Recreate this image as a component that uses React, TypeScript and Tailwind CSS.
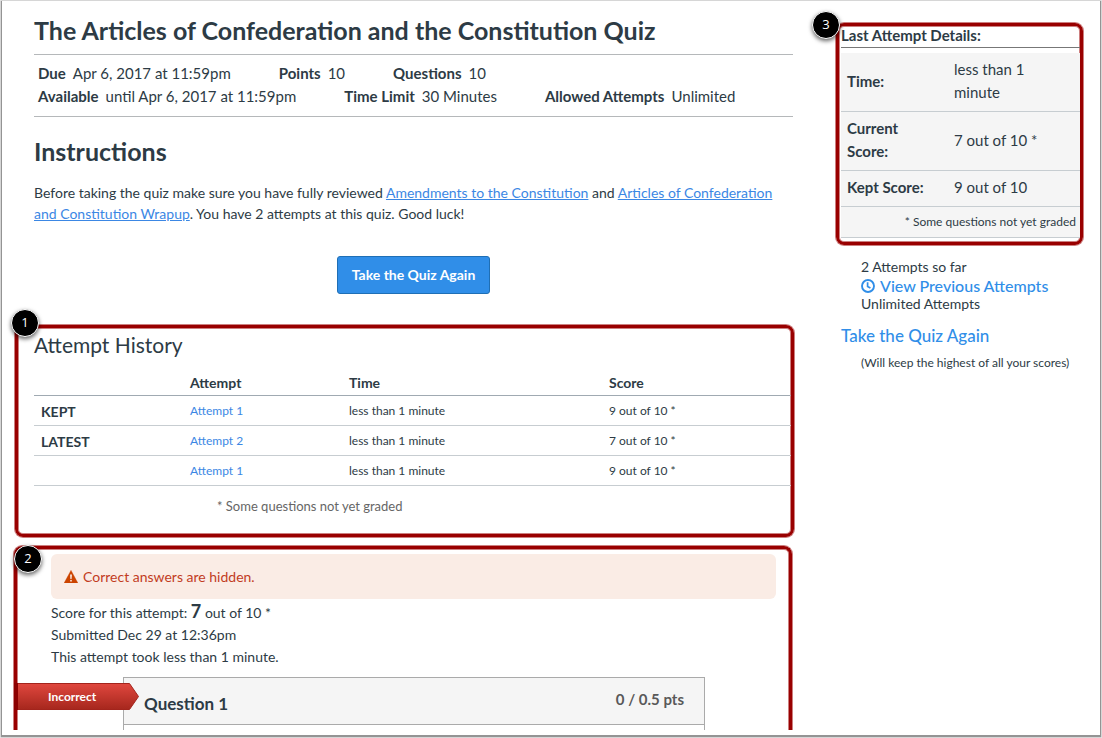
import React from 'react';

interface Attempt {
  label: string;
  name: string;
  time: string;
  score: string;
}

const attempts: Attempt[] = [
  { label: 'KEPT', name: 'Attempt 1', time: 'less than 1 minute', score: '9 out of 10 *' },
  { label: 'LATEST', name: 'Attempt 2', time: 'less than 1 minute', score: '7 out of 10 *' },
  { label: '', name: 'Attempt 1', time: 'less than 1 minute', score: '9 out of 10 *' },
];

const Detail: React.FC<{ label: string; value: string }> = ({ label, value }) => (
  <div className="flex gap-[7px]">
    <dt className="font-bold">{label}</dt>
    <dd>{value}</dd>
  </div>
);

const Badge: React.FC<{ value: number; className: string }> = ({ value, className }) => (
  <span
    className={`absolute flex size-7 items-center justify-center rounded-full border border-white bg-black font-['Open_Sans',sans-serif] text-[13px] text-white shadow-[0_2px_4px_rgba(0,0,0,0.6)] ${className}`}
  >
    {value}
  </span>
);

const ClockIcon = () => (
  <svg viewBox="0 0 14 14" className="size-[14px]" fill="none" stroke="currentColor" aria-hidden="true">
    <circle cx="7" cy="7" r="6" strokeWidth="1.9" />
    <path d="M6.6 3.2v4.200l2.800 1.600" strokeWidth="1.7" />
  </svg>
);

const WarningIcon = () => (
  <svg viewBox="0 0 14 13" className="h-[13px] w-[14px]" aria-hidden="true">
    <path d="M7 .3 13.9 13H.1z" fill="#cc4400" stroke="#cc4400" strokeWidth=".3" strokeLinejoin="round" />
    <path d="M6.1 4.6h1.8L7.6 9H6.4z" fill="#faece5" />
    <rect x="6.2" y="9.9" width="1.6" height="1.6" fill="#faece5" />
  </svg>
);

const QuizHeader = () => (
  <div className="pl-5 pr-[3px]">
    <h1 className="border-b border-[#b5b8ba] pt-[13px] pb-2 text-[25px] leading-8 font-bold">
      The Articles of Confederation and the Constitution Quiz
    </h1>
    <div className="border-b border-[#b5b8ba] px-1 pt-[7px] pb-2 text-[15px] leading-[23px]">
      <dl className="flex flex-wrap gap-x-12">
        <Detail label="Due" value="Apr 6, 2017 at 11:59pm" />
        <Detail label="Points" value="10" />
        <Detail label="Questions" value="10" />
      </dl>
      <dl className="flex flex-wrap gap-x-12">
        <Detail label="Available" value="until Apr 6, 2017 at 11:59pm" />
        <Detail label="Time Limit" value="30 Minutes" />
        <Detail label="Allowed Attempts" value="Unlimited" />
      </dl>
    </div>
    <h2 className="mt-[18px] text-[25px] leading-8 font-bold">Instructions</h2>
    <p className="mt-[15px] text-[14px] leading-[21px]">
      Before taking the quiz make sure you have fully reviewed{' '}
      <a href="#amendments" className="text-[#3b87e4] underline">Amendments to the Constitution</a> and{' '}
      <a href="#articles" className="text-[#3b87e4] underline">
        Articles of Confederation and Constitution Wrapup
      </a>
      . You have 2 attempts at this quiz. Good luck!
    </p>
    <div className="mt-8 flex justify-center">
      <button
        type="button"
        className="rounded-[3px] border border-[#1f6fb5] bg-[#308ee8] px-[14px] py-2 text-[14px] leading-5 font-bold text-white"
      >
        Take the Quiz Again
      </button>
    </div>
  </div>
);

const AttemptHistory = () => (
  <section className="relative mt-[31px] mr-[2px] ml-px rounded-lg border-3 border-[#990000] pb-[18px] pl-4 ring-1 ring-[#990000]/50 inset-ring-1 inset-ring-[#990000]/50">
    <Badge value={1} className="-top-[19px] -left-[7px]" />
    <h2 className="pt-[3px] text-[21px] leading-7">Attempt History</h2>
    <table className="mt-[10px] w-full table-fixed border-collapse text-left">
      <thead>
        <tr className="border-b border-[#a0aab2] text-[14px] leading-6">
          <th className="w-[149px] pt-[2px]"></th>
          <th scope="col" className="w-[159px] px-[7px] pt-[2px]">Attempt</th>
          <th scope="col" className="w-[260px] px-[7px] pt-[2px]">Time</th>
          <th scope="col" className="px-[7px] pt-[2px]">Score</th>
        </tr>
      </thead>
      <tbody>
        {attempts.map((attempt, i) => (
          <tr key={i} className="h-[30px] border-b border-[#c7cdd1] text-[12px]">
            <th scope="row" className="px-[7px] pt-[2px] text-[14px]">{attempt.label}</th>
            <td className="px-[7px]">
              <a href="#attempt" className="text-[#3b87e4]">{attempt.name}</a>
            </td>
            <td className="px-[7px]">{attempt.time}</td>
            <td className="px-[7px]">{attempt.score}</td>
          </tr>
        ))}
      </tbody>
    </table>
    <p className="mt-[10px] ml-[183px] text-[13px] leading-5 text-[#666]">* Some questions not yet graded</p>
  </section>
);

const AttemptResult = () => (
  <section className="relative mt-2 mr-[3px] -ml-px">
    <div className="overflow-hidden px-px pt-px">
      <div className="-mb-2 rounded-t-lg border-3 border-b-0 border-[#990000] pb-2 ring-1 ring-[#990000]/50 inset-ring-1 inset-ring-[#990000]/50">
        <div className="mt-[5px] mr-[13px] ml-[34px] flex h-[45px] items-center gap-[5px] rounded-md bg-[#faece5] px-[13px] text-[14px] text-[#c23c1e]">
          <WarningIcon />
          Correct answers are hidden.
        </div>
        <div className="mt-px ml-[34px] text-[14px] leading-[22px]">
          <p>
            Score for this attempt: <strong className="text-[18px] leading-[22px]">7</strong> out of 10 *
          </p>
          <p>Submitted Dec 29 at 12:36pm</p>
          <p>This attempt took less than 1 minute.</p>
        </div>
        <div className="relative mt-[9px] mr-[84px] ml-[106px] border border-b-0 border-[#aaa]">
          <div className="flex items-start justify-between border-b border-[#aaa] bg-[#f5f5f5] px-5 pt-[10px] pb-2">
            <h3 className="pt-1 text-[17px] leading-6 font-bold">Question 1</h3>
            <span className="text-[15px] leading-[22px] font-bold text-[#595959]">0 / 0.5 pts</span>
          </div>
          <div className="h-[5px]"></div>
          <div className="absolute top-[5px] -left-[110px] flex h-[27px] w-[125px] items-center">
            <svg viewBox="0 0 125 27" className="absolute inset-0 size-full" aria-hidden="true">
              <defs>
                <linearGradient id="flag" x1="0" y1="0" x2="0" y2="1">
                  <stop offset="0" stopColor="#e0473e" />
                  <stop offset="1" stopColor="#a6271d" />
                </linearGradient>
              </defs>
              <path d="M0 .5h115.5l9 13-9 13H0z" fill="url(#flag)" stroke="#a3241c" />
              <path d="M0 0h4v27H0z" fill="#8c0000" />
            </svg>
            <span className="relative pl-[34px] text-[12px] font-bold text-white">Incorrect</span>
          </div>
        </div>
      </div>
    </div>
    <Badge value={2} className="top-0 left-px" />
  </section>
);

const Sidebar = () => (
  <aside className="w-[247px] shrink-0 pt-[22px]">
    <section className="relative rounded-lg border-3 border-[#990000] pb-1 pl-[2px] ring-1 ring-[#990000]/50 inset-ring-1 inset-ring-[#990000]/50">
      <Badge value={3} className="-top-[15px] -left-[27px]" />
      <h2 className="mb-[5px] border-b border-[#777] pb-[3px] text-[15px] leading-[18px] font-bold">
        Last Attempt Details:
      </h2>
      <table className="w-full border-collapse bg-[#f5f5f5] text-left text-[15px] leading-[23px]">
        <tbody>
          <tr className="border-b border-[#c7cdd1]">
            <th scope="row" className="w-[107px] px-[6px] pt-[5px] pb-[7px]">Time:</th>
            <td className="pt-[5px] pr-12 pb-[7px] pl-[6px]">less than 1 minute</td>
          </tr>
          <tr className="border-b border-[#c7cdd1]">
            <th scope="row" className="px-[6px] pt-[5px] pb-[7px]">Current Score:</th>
            <td className="px-[6px] pt-[5px] pb-[7px]">7 out of 10 *</td>
          </tr>
          <tr className="border-b border-[#c7cdd1]">
            <th scope="row" className="px-[6px] pt-[5px] pb-[7px]">Kept Score:</th>
            <td className="px-[6px] pt-[5px] pb-[7px]">9 out of 10</td>
          </tr>
          <tr className="border-b border-[#c7cdd1]">
            <td colSpan={2} className="pt-[3px] pr-1 pb-1 text-right text-[12px]">
              * Some questions not yet graded
            </td>
          </tr>
        </tbody>
      </table>
    </section>
    <div className="mt-[13px] pl-[25px] text-[14px] leading-[18px]">
      <p>2 Attempts so far</p>
      <a href="#previous" className="flex items-center gap-[5px] text-[16px] leading-[19px] font-medium text-[#308ee8]">
        <ClockIcon />
        View Previous Attempts
      </a>
      <p>Unlimited Attempts</p>
    </div>
    <a href="#retake" className="mt-[11px] ml-[5px] block text-[17px] leading-6 font-medium text-[#308ee8]">
      Take the Quiz Again
    </a>
    <p className="mt-[6px] pl-[25px] text-[12px] leading-[18px]">(Will keep the highest of all your scores)</p>
  </aside>
);

const App = () => (
  <div className="flex min-h-screen bg-[#e4e4e4] px-[2px] pt-px pb-[3px] font-['Lato',sans-serif] text-[#2d3b45]">
    <div className="flex flex-1 gap-10 bg-white pr-[17px] pb-[5px] pl-3 shadow-[0_1px_1px_1px_rgba(0,0,0,0.35)]">
      <main className="min-w-0 flex-1">
        <QuizHeader />
        <AttemptHistory />
        <AttemptResult />
      </main>
      <Sidebar />
    </div>
  </div>
);

export default App;
